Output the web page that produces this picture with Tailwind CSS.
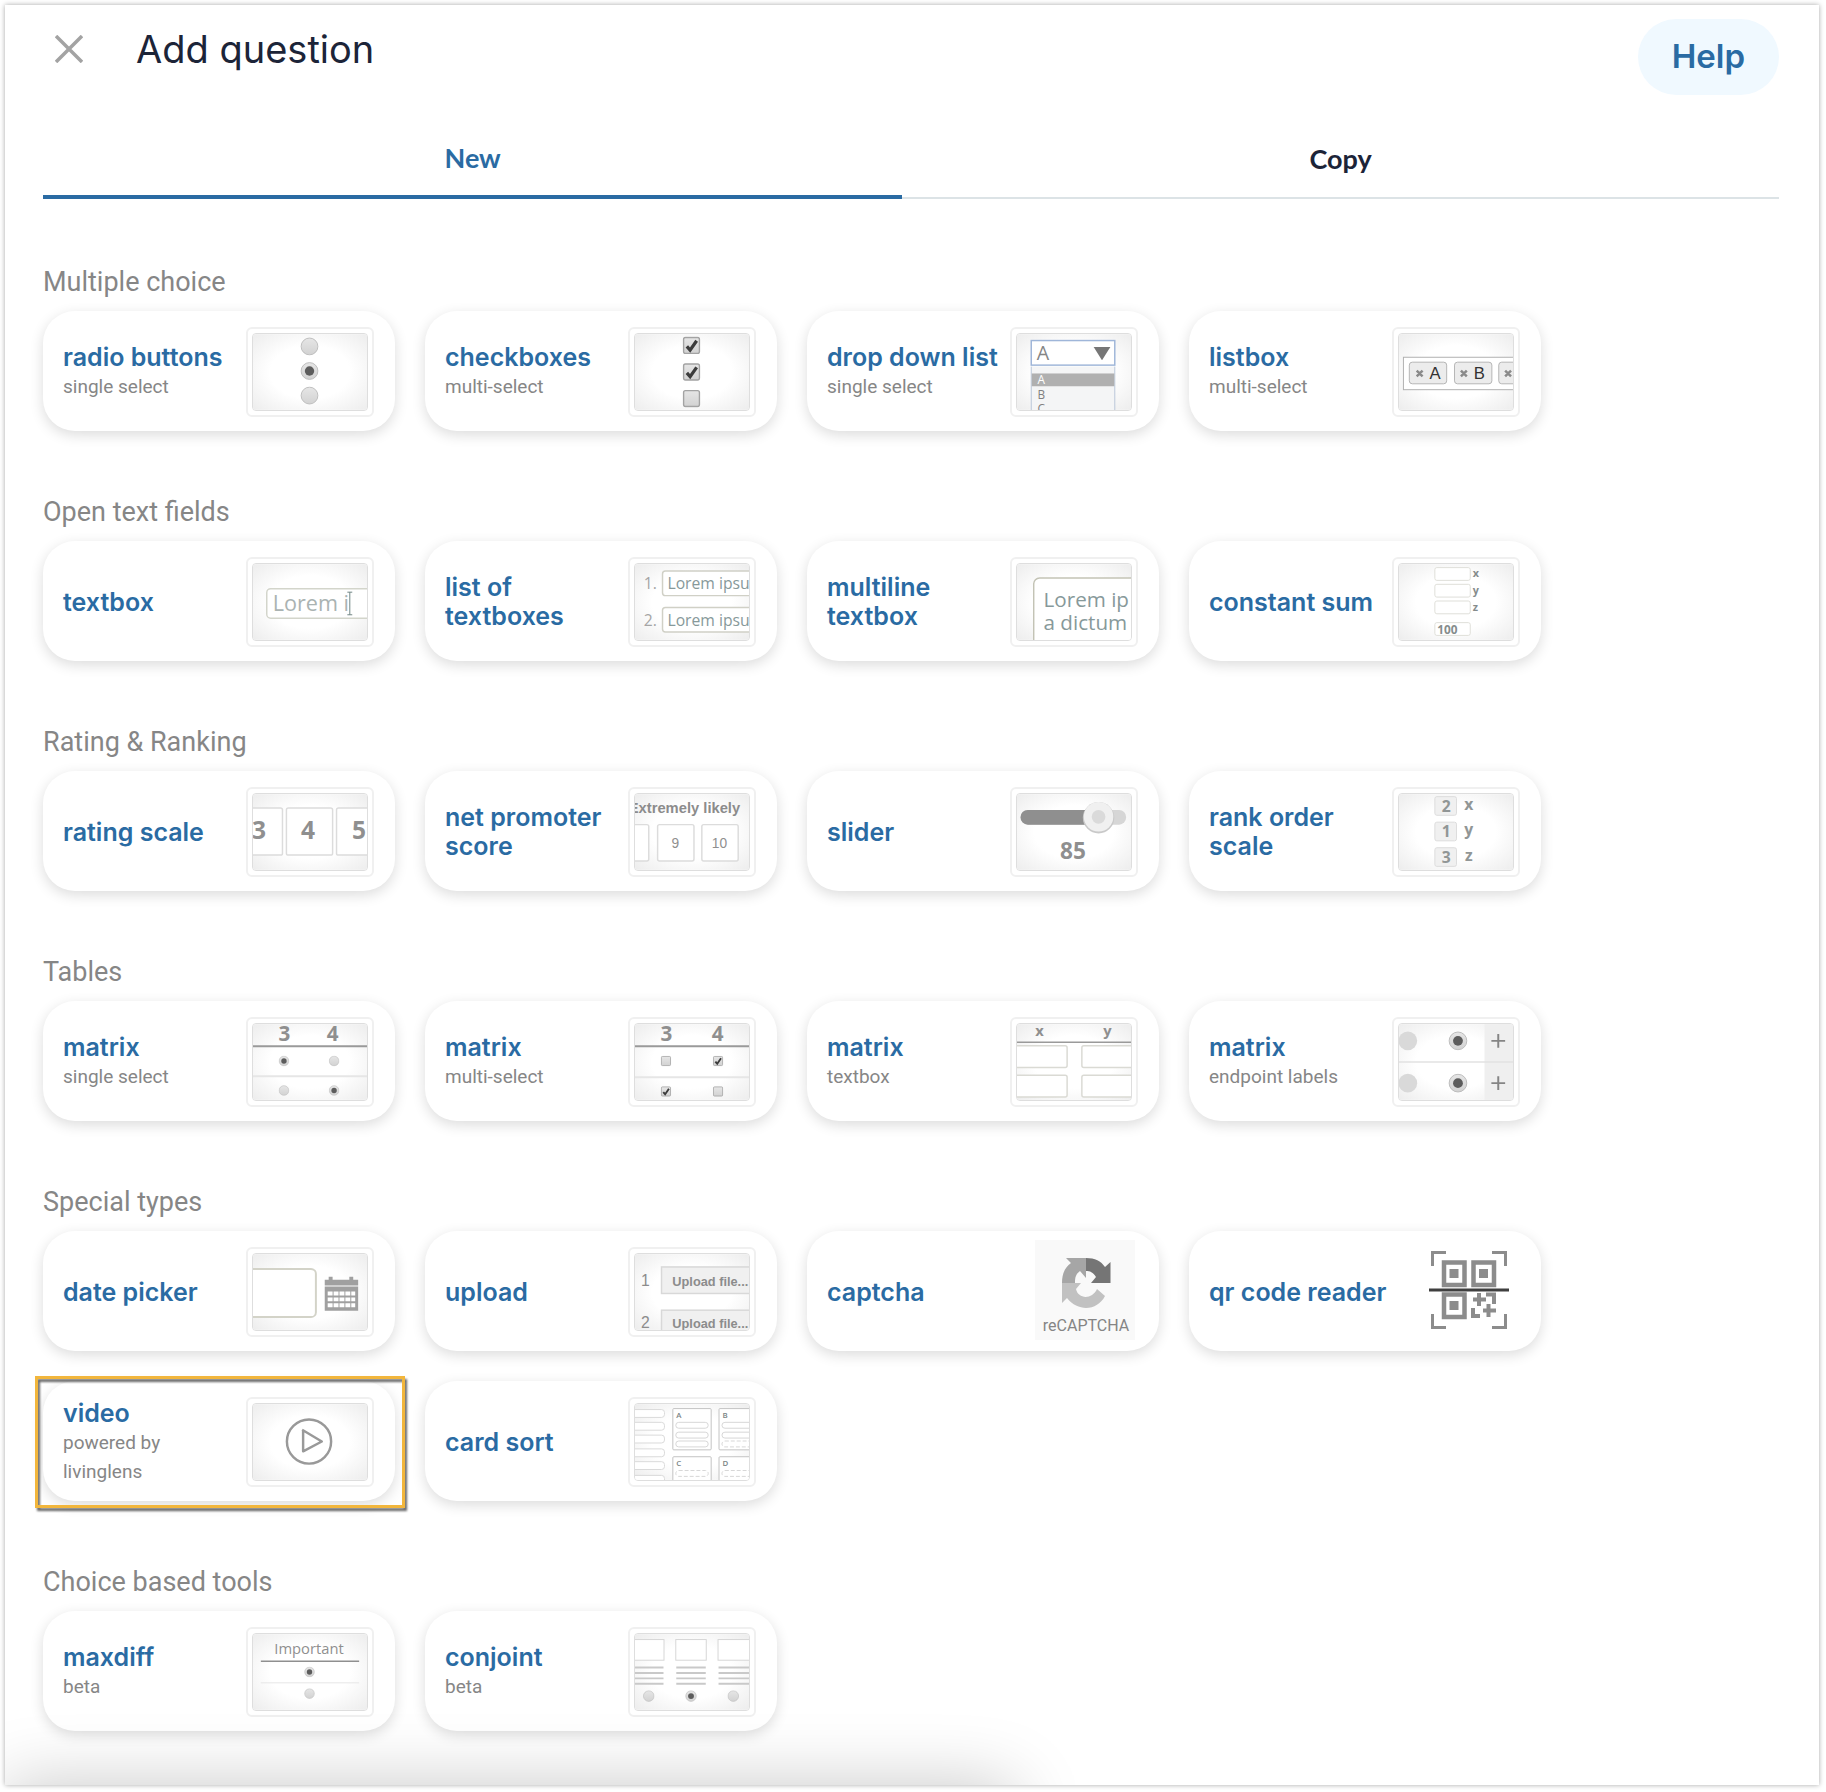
<!DOCTYPE html>
<html lang="en">
<head>
  <meta charset="UTF-8" />
  <meta name="viewport" content="width=device-width, initial-scale=1.0"/>
  <title>Add question</title>
  <script src="https://cdn.jsdelivr.net/npm/@tailwindcss/browser@4"></script>
</head>
<body class="bg-white p-[5px] pr-[7px] font-['Inter',sans-serif] text-[#1c2438]">

  <!-- Shared thumbnail parts -->
  <svg class="absolute h-0 w-0" aria-hidden="true">
    <defs>
      <radialGradient id="bg" cx="50%" cy="50%" r="70%">
        <stop offset="50%" stop-color="#ffffff"/>
        <stop offset="100%" stop-color="#ededed"/>
      </radialGradient>
      <linearGradient id="knob" x1="0" y1="0" x2="0" y2="1">
        <stop offset="0" stop-color="#e6e6e6"/>
        <stop offset="1" stop-color="#d2d2d2"/>
      </linearGradient>
      <symbol id="radio" viewBox="0 0 20 20">
        <circle cx="10" cy="10" r="9" fill="url(#knob)" stroke="#bcbcbc"/>
      </symbol>
      <symbol id="radio-on" viewBox="0 0 20 20">
        <circle cx="10" cy="10" r="9" fill="url(#knob)" stroke="#bcbcbc"/>
        <circle cx="10" cy="10" r="5" fill="#5c5c5c"/>
      </symbol>
      <symbol id="check" viewBox="0 0 20 20">
        <rect x="1.5" y="1.5" width="17" height="17" rx="2" fill="url(#knob)" stroke="#a3a3a3" stroke-width="1.5"/>
      </symbol>
      <symbol id="check-on" viewBox="0 0 20 20">
        <rect x="1.5" y="1.5" width="17" height="17" rx="2" fill="url(#knob)" stroke="#a3a3a3" stroke-width="1.5"/>
        <path d="M5 11l3.500 4L15.500 5" fill="none" stroke="#3c3c3c" stroke-width="3.500"/>
      </symbol>
    </defs>
  </svg>

  <main class="relative overflow-hidden bg-white pt-[14px] pr-10 pb-[54px] pl-[38px] shadow-[0_0_5px_rgba(0,0,0,0.35)]">

    <!-- Header -->
    <header class="flex items-start justify-between">
      <div class="flex h-[60px] items-center">
        <button type="button" aria-label="Close" class="ml-3 mr-[53px]">
          <svg class="block h-7 w-7" viewBox="0 0 28 28" stroke="#a3a3a3" stroke-width="3.500"><path d="M1 1l26 26M27 1L1 27"/></svg>
        </button>
        <h1 class="text-[38px]">Add question</h1>
      </div>
      <button type="button" class="h-[76px] rounded-full bg-[#f0f9ff] px-[34px] text-[33px] font-semibold text-[#2a6ba3]">Help</button>
    </header>

    <!-- Tabs -->
    <div role="tablist" class="mt-[22px] flex h-[82px] border-b-2 border-[#dce3e6] font-['Lato',sans-serif] text-[27px] font-bold">
      <button type="button" role="tab" aria-selected="true" class="-mb-[2px] w-[49.5%] border-b-4 border-[#2a6ba3] pt-1 text-[#2a6ba3]">New</button>
      <button type="button" role="tab" aria-selected="false" class="flex-1 pt-1">Copy</button>
    </div>

    <div class="mt-16 flex max-w-[1498px] flex-col gap-[62px] text-[25px] leading-[29px] font-semibold text-[#2a6ba3]">

      <!-- Multiple choice -->
      <section>
        <h2 class="mb-[10px] font-['Roboto',sans-serif] text-[27px] leading-[38px] font-normal text-[#868686]">Multiple choice</h2>
        <div class="grid grid-cols-4 gap-[30px]">
          <button type="button" class="flex min-h-[120px] items-center justify-between rounded-[32px] bg-white pt-0.5 pl-5 pr-[21px] text-left shadow-[0_4px_14px_rgba(0,0,0,0.14)]">
            <span class="whitespace-nowrap">radio buttons<small class="block font-['Roboto',sans-serif] text-[19px] font-normal text-[#868686]">single select</small></span>
            <span class="shrink-0 rounded-md border-2 border-[#f0f0f0] p-1">
              <svg class="block h-[78px] w-[116px] rounded-sm border border-[#dedede]" viewBox="0 0 116 77" aria-hidden="true">
                <rect width="116" height="77" fill="url(#bg)"/>
                <use href="#radio" x="48" y="3" width="19" height="19"/>
                <use href="#radio-on" x="48" y="28" width="19" height="19"/>
                <use href="#radio" x="48" y="53" width="19" height="19"/>
              </svg>
            </span>
          </button>
          <button type="button" class="flex min-h-[120px] items-center justify-between rounded-[32px] bg-white pt-0.5 pl-5 pr-[21px] text-left shadow-[0_4px_14px_rgba(0,0,0,0.14)]">
            <span class="whitespace-nowrap">checkboxes<small class="block font-['Roboto',sans-serif] text-[19px] font-normal text-[#868686]">multi-select</small></span>
            <span class="shrink-0 rounded-md border-2 border-[#f0f0f0] p-1">
              <svg class="block h-[78px] w-[116px] rounded-sm border border-[#dedede]" viewBox="0 0 116 77" aria-hidden="true">
                <rect width="116" height="77" fill="url(#bg)"/>
                <use href="#check-on" x="48" y="2" width="19" height="19"/>
                <use href="#check-on" x="48" y="29" width="19" height="19"/>
                <use href="#check" x="48" y="56" width="19" height="19"/>
              </svg>
            </span>
          </button>
          <button type="button" class="flex min-h-[120px] items-center justify-between rounded-[32px] bg-white pt-0.5 pl-5 pr-[21px] text-left shadow-[0_4px_14px_rgba(0,0,0,0.14)]">
            <span class="whitespace-nowrap">drop down list<small class="block font-['Roboto',sans-serif] text-[19px] font-normal text-[#868686]">single select</small></span>
            <span class="shrink-0 rounded-md border-2 border-[#f0f0f0] p-1">
              <svg class="block h-[78px] w-[116px] rounded-sm border border-[#dedede] font-['Open_Sans',sans-serif] font-normal" viewBox="0 0 116 77" aria-hidden="true">
                <rect width="116" height="77" fill="url(#bg)"/>
                <path d="M14.500 33V80H99.500V33" fill="#f4f5f6" stroke="#b9c6d8"/>
                <rect x="14.500" y="6.500" width="85" height="25" fill="#fff" stroke="#9fb6d9" stroke-width="1.500"/>
                <text x="20" y="26" font-size="20" fill="#858585">A</text>
                <path d="M78 13H95L86.500 26.500Z" fill="#767676"/>
                <rect x="15" y="40" width="84" height="13" fill="#b0b0b0"/>
                <text x="21" y="51" font-size="12" fill="#fff">A</text>
                <text x="21" y="66" font-size="12" fill="#808080">B</text>
                <text x="21" y="80" font-size="12" fill="#808080">C</text>
              </svg>
            </span>
          </button>
          <button type="button" class="flex min-h-[120px] items-center justify-between rounded-[32px] bg-white pt-0.5 pl-5 pr-[21px] text-left shadow-[0_4px_14px_rgba(0,0,0,0.14)]">
            <span class="whitespace-nowrap">listbox<small class="block font-['Roboto',sans-serif] text-[19px] font-normal text-[#868686]">multi-select</small></span>
            <span class="shrink-0 rounded-md border-2 border-[#f0f0f0] p-1">
              <svg class="block h-[78px] w-[116px] rounded-sm border border-[#dedede] font-['Liberation_Sans',sans-serif] font-normal" viewBox="0 0 116 77" aria-hidden="true">
                <rect width="116" height="77" fill="url(#bg)"/>
                <rect x="4.500" y="23.500" width="120" height="33" fill="#fff" stroke="#b0b0b0"/>
                <g fill="#ececec" stroke="#b5b5b5">
                  <rect x="10.500" y="28.500" width="38" height="22" rx="3"/>
                  <rect x="56.500" y="28.500" width="38" height="22" rx="3"/>
                  <rect x="101.500" y="28.500" width="38" height="22" rx="3"/>
                </g>
                <path d="M18 37l6 6m0-6l-6 6M63 37l6 6m0-6l-6 6M108 37l6 6m0-6l-6 6" stroke="#8a8a8a" stroke-width="2.500"/>
                <text x="31" y="46" font-size="17" fill="#333">A</text>
                <text x="76" y="46" font-size="17" fill="#333">B</text>
              </svg>
            </span>
          </button>
        </div>
      </section>

      <!-- Open text fields -->
      <section>
        <h2 class="mb-[10px] font-['Roboto',sans-serif] text-[27px] leading-[38px] font-normal text-[#868686]">Open text fields</h2>
        <div class="grid grid-cols-4 gap-[30px]">
          <button type="button" class="flex min-h-[120px] items-center justify-between rounded-[32px] bg-white pt-0.5 pl-5 pr-[21px] text-left shadow-[0_4px_14px_rgba(0,0,0,0.14)]">
            <span>textbox</span>
            <span class="shrink-0 rounded-md border-2 border-[#f0f0f0] p-1">
              <svg class="block h-[78px] w-[116px] rounded-sm border border-[#dedede] font-['Open_Sans',sans-serif] font-normal" viewBox="0 0 116 77" aria-hidden="true">
                <rect width="116" height="77" fill="url(#bg)"/>
                <rect x="14" y="25" width="120" height="30" rx="4" fill="#fff" stroke="#d3d5cb" stroke-width="1.500"/>
                <text x="20" y="48" font-size="22" fill="#aab3b2">Lorem i</text>
                <path d="M96 28.500h5M96 51.500h5M98.500 28.500v23" fill="none" stroke="#6f8583"/>
              </svg>
            </span>
          </button>
          <button type="button" class="flex min-h-[120px] items-center justify-between rounded-[32px] bg-white pt-0.5 pl-5 pr-[21px] text-left shadow-[0_4px_14px_rgba(0,0,0,0.14)]">
            <span>list of<br>textboxes</span>
            <span class="shrink-0 rounded-md border-2 border-[#f0f0f0] p-1">
              <svg class="block h-[78px] w-[116px] rounded-sm border border-[#dedede] font-['Open_Sans',sans-serif] font-normal" viewBox="0 0 116 77" aria-hidden="true">
                <rect width="116" height="77" fill="url(#bg)"/>
                <g fill="#fff" stroke="#d0d0c6" stroke-width="1.500">
                  <rect x="28" y="7" width="120" height="25" rx="3"/>
                  <rect x="28" y="44" width="120" height="25" rx="3"/>
                </g>
                <g font-size="16" fill="#87999a">
                  <text x="9" y="25" fill="#a5a5a5">1.</text>
                  <text x="33" y="25">Lorem ipsu</text>
                  <text x="9" y="63" fill="#a5a5a5">2.</text>
                  <text x="33" y="63">Lorem ipsu</text>
                </g>
              </svg>
            </span>
          </button>
          <button type="button" class="flex min-h-[120px] items-center justify-between rounded-[32px] bg-white pt-0.5 pl-5 pr-[21px] text-left shadow-[0_4px_14px_rgba(0,0,0,0.14)]">
            <span>multiline<br>textbox</span>
            <span class="shrink-0 rounded-md border-2 border-[#f0f0f0] p-1">
              <svg class="block h-[78px] w-[116px] rounded-sm border border-[#dedede] font-['Open_Sans',sans-serif] font-normal" viewBox="0 0 116 77" aria-hidden="true">
                <rect width="116" height="77" fill="url(#bg)"/>
                <rect x="17" y="14" width="120" height="90" rx="6" fill="#fff" stroke="#c3c3b5" stroke-width="1.500"/>
                <g font-size="21" fill="#87999a">
                  <text x="27" y="44">Lorem ip</text>
                  <text x="27" y="67">a dictum</text>
                </g>
              </svg>
            </span>
          </button>
          <button type="button" class="flex min-h-[120px] items-center justify-between rounded-[32px] bg-white pt-0.5 pl-5 pr-[21px] text-left shadow-[0_4px_14px_rgba(0,0,0,0.14)]">
            <span class="whitespace-nowrap">constant sum</span>
            <span class="shrink-0 rounded-md border-2 border-[#f0f0f0] p-1">
              <svg class="block h-[78px] w-[116px] rounded-sm border border-[#dedede] font-['Open_Sans',sans-serif] font-bold" viewBox="0 0 116 77" aria-hidden="true">
                <rect width="116" height="77" fill="url(#bg)"/>
                <g fill="#fff" stroke="#deded8">
                  <rect x="36.500" y="3.500" width="36" height="13" rx="2"/>
                  <rect x="36.500" y="20.500" width="36" height="13" rx="2"/>
                  <rect x="36.500" y="37.500" width="36" height="13" rx="2"/>
                  <rect x="36.500" y="59.500" width="36" height="13" rx="2"/>
                </g>
                <g font-size="11" fill="#858c8c">
                  <text x="75" y="13">x</text>
                  <text x="75" y="30">y</text>
                  <text x="75" y="48">z</text>
                  <text x="39" y="71" font-size="12">100</text>
                </g>
              </svg>
            </span>
          </button>
        </div>
      </section>

      <!-- Rating & Ranking -->
      <section>
        <h2 class="mb-[10px] font-['Roboto',sans-serif] text-[27px] leading-[38px] font-normal text-[#868686]">Rating &amp; Ranking</h2>
        <div class="grid grid-cols-4 gap-[30px]">
          <button type="button" class="flex min-h-[120px] items-center justify-between rounded-[32px] bg-white pt-0.5 pl-5 pr-[21px] text-left shadow-[0_4px_14px_rgba(0,0,0,0.14)]">
            <span class="whitespace-nowrap">rating scale</span>
            <span class="shrink-0 rounded-md border-2 border-[#f0f0f0] p-1">
              <svg class="block h-[78px] w-[116px] rounded-sm border border-[#dedede] font-['Open_Sans',sans-serif] font-bold" viewBox="0 0 116 77" aria-hidden="true">
                <rect width="116" height="77" fill="url(#bg)"/>
                <g fill="#fff" stroke="#dcdcdc" stroke-width="1.500">
                  <rect x="-18" y="14" width="48" height="48" rx="2"/>
                  <rect x="34" y="14" width="47" height="48" rx="2"/>
                  <rect x="85" y="14" width="48" height="48" rx="2"/>
                </g>
                <g font-size="25" fill="#8f8f8f" text-anchor="middle">
                  <text x="6" y="46">3</text>
                  <text x="56" y="46">4</text>
                  <text x="108" y="46">5</text>
                </g>
              </svg>
            </span>
          </button>
          <button type="button" class="flex min-h-[120px] items-center justify-between rounded-[32px] bg-white pt-0.5 pl-5 pr-[21px] text-left shadow-[0_4px_14px_rgba(0,0,0,0.14)]">
            <span class="whitespace-nowrap">net promoter<br>score</span>
            <span class="shrink-0 rounded-md border-2 border-[#f0f0f0] p-1">
              <svg class="block h-[78px] w-[116px] rounded-sm border border-[#dedede] font-['Liberation_Sans',sans-serif] font-normal" viewBox="0 0 116 77" aria-hidden="true">
                <rect width="116" height="77" fill="url(#bg)"/>
                <text x="107" y="19" font-size="15" font-weight="700" fill="#8c8c8c" text-anchor="end">Extremely likely</text>
                <g fill="#fff" stroke="#dcdcdc" stroke-width="1.500">
                  <rect x="-20" y="31" width="34" height="37" rx="2"/>
                  <rect x="23" y="31" width="37" height="37" rx="2"/>
                  <rect x="68" y="31" width="37" height="37" rx="2"/>
                </g>
                <g font-size="14" fill="#8f8f8f" text-anchor="middle">
                  <text x="41" y="55">9</text>
                  <text x="86" y="55">10</text>
                </g>
              </svg>
            </span>
          </button>
          <button type="button" class="flex min-h-[120px] items-center justify-between rounded-[32px] bg-white pt-0.5 pl-5 pr-[21px] text-left shadow-[0_4px_14px_rgba(0,0,0,0.14)]">
            <span>slider</span>
            <span class="shrink-0 rounded-md border-2 border-[#f0f0f0] p-1">
              <svg class="block h-[78px] w-[116px] rounded-sm border border-[#dedede] font-['Open_Sans',sans-serif] font-bold" viewBox="0 0 116 77" aria-hidden="true">
                <rect width="116" height="77" fill="url(#bg)"/>
                <rect x="4" y="16" width="107" height="15" rx="7" fill="#d6d6d6"/>
                <path d="M11 16H83V31H11A7.500 7.500 0 0 1 11 16Z" fill="#8f8f8f"/>
                <circle cx="83" cy="24" r="16" fill="#c9c9c9"/>
                <circle cx="83" cy="23" r="15" fill="#f0f0f0"/>
                <circle cx="83" cy="23" r="7" fill="#dadada"/>
                <text x="57" y="66" font-size="23" fill="#8f8f8f" text-anchor="middle">85</text>
              </svg>
            </span>
          </button>
          <button type="button" class="flex min-h-[120px] items-center justify-between rounded-[32px] bg-white pt-0.5 pl-5 pr-[21px] text-left shadow-[0_4px_14px_rgba(0,0,0,0.14)]">
            <span class="whitespace-nowrap">rank order<br>scale</span>
            <span class="shrink-0 rounded-md border-2 border-[#f0f0f0] p-1">
              <svg class="block h-[78px] w-[116px] rounded-sm border border-[#dedede] font-['Open_Sans',sans-serif] font-bold" viewBox="0 0 116 77" aria-hidden="true">
                <rect width="116" height="77" fill="url(#bg)"/>
                <g fill="#f0f0f0" stroke="#dcdcdc">
                  <rect x="36.500" y="2.500" width="22" height="19" rx="2"/>
                  <rect x="36.500" y="28.500" width="22" height="19" rx="2"/>
                  <rect x="36.500" y="54.500" width="22" height="19" rx="2"/>
                </g>
                <g font-size="16" fill="#919696" text-anchor="middle">
                  <text x="48" y="18">2</text><text x="71" y="16">x</text>
                  <text x="48" y="44">1</text><text x="71" y="42">y</text>
                  <text x="48" y="70">3</text><text x="71" y="68">z</text>
                </g>
              </svg>
            </span>
          </button>
        </div>
      </section>

      <!-- Tables -->
      <section>
        <h2 class="mb-[10px] font-['Roboto',sans-serif] text-[27px] leading-[38px] font-normal text-[#868686]">Tables</h2>
        <div class="grid grid-cols-4 gap-[30px]">
          <button type="button" class="flex min-h-[120px] items-center justify-between rounded-[32px] bg-white pt-0.5 pl-5 pr-[21px] text-left shadow-[0_4px_14px_rgba(0,0,0,0.14)]">
            <span class="whitespace-nowrap">matrix<small class="block font-['Roboto',sans-serif] text-[19px] font-normal text-[#868686]">single select</small></span>
            <span class="shrink-0 rounded-md border-2 border-[#f0f0f0] p-1">
              <svg class="block h-[78px] w-[116px] rounded-sm border border-[#dedede] font-['Open_Sans',sans-serif] font-bold" viewBox="0 0 116 77" aria-hidden="true">
                <rect width="116" height="77" fill="url(#bg)"/>
                <g font-size="21" fill="#8f8f8f" text-anchor="middle">
                  <text x="32" y="17">3</text>
                  <text x="81" y="17">4</text>
                </g>
                <path d="M0 22.500H116" stroke="#9a9a9a" stroke-width="2"/>
                <path d="M0 53H116" stroke="#e6e6e6" stroke-width="2"/>
                <use href="#radio-on" x="26" y="32" width="11" height="11"/>
                <use href="#radio" x="77" y="32" width="11" height="11"/>
                <use href="#radio" x="26" y="62" width="11" height="11"/>
                <use href="#radio-on" x="77" y="62" width="11" height="11"/>
              </svg>
            </span>
          </button>
          <button type="button" class="flex min-h-[120px] items-center justify-between rounded-[32px] bg-white pt-0.5 pl-5 pr-[21px] text-left shadow-[0_4px_14px_rgba(0,0,0,0.14)]">
            <span class="whitespace-nowrap">matrix<small class="block font-['Roboto',sans-serif] text-[19px] font-normal text-[#868686]">multi-select</small></span>
            <span class="shrink-0 rounded-md border-2 border-[#f0f0f0] p-1">
              <svg class="block h-[78px] w-[116px] rounded-sm border border-[#dedede] font-['Open_Sans',sans-serif] font-bold" viewBox="0 0 116 77" aria-hidden="true">
                <rect width="116" height="77" fill="url(#bg)"/>
                <g font-size="21" fill="#8f8f8f" text-anchor="middle">
                  <text x="32" y="17">3</text>
                  <text x="84" y="17">4</text>
                </g>
                <path d="M0 22.500H116" stroke="#9a9a9a" stroke-width="2"/>
                <path d="M0 54H116" stroke="#e6e6e6" stroke-width="2"/>
                <use href="#check" x="26" y="32" width="11" height="11"/>
                <use href="#check-on" x="79" y="32" width="11" height="11"/>
                <use href="#check-on" x="26" y="63" width="11" height="11"/>
                <use href="#check" x="79" y="63" width="11" height="11"/>
              </svg>
            </span>
          </button>
          <button type="button" class="flex min-h-[120px] items-center justify-between rounded-[32px] bg-white pt-0.5 pl-5 pr-[21px] text-left shadow-[0_4px_14px_rgba(0,0,0,0.14)]">
            <span class="whitespace-nowrap">matrix<small class="block font-['Roboto',sans-serif] text-[19px] font-normal text-[#868686]">textbox</small></span>
            <span class="shrink-0 rounded-md border-2 border-[#f0f0f0] p-1">
              <svg class="block h-[78px] w-[116px] rounded-sm border border-[#dedede] font-['Open_Sans',sans-serif] font-bold" viewBox="0 0 116 77" aria-hidden="true">
                <rect width="116" height="77" fill="url(#bg)"/>
                <g font-size="15" fill="#8f8f8f" text-anchor="middle">
                  <text x="23" y="12">x</text>
                  <text x="92" y="12">y</text>
                </g>
                <path d="M0 18.500H116" stroke="#9a9a9a" stroke-width="1.500"/>
                <g fill="#fff" stroke="#dadad4" stroke-width="1.500">
                  <rect x="-20" y="22" width="71" height="22" rx="2"/>
                  <rect x="66" y="22" width="71" height="22" rx="2"/>
                  <rect x="-20" y="52" width="71" height="22" rx="2"/>
                  <rect x="66" y="52" width="71" height="22" rx="2"/>
                </g>
              </svg>
            </span>
          </button>
          <button type="button" class="flex min-h-[120px] items-center justify-between rounded-[32px] bg-white pt-0.5 pl-5 pr-[21px] text-left shadow-[0_4px_14px_rgba(0,0,0,0.14)]">
            <span class="whitespace-nowrap">matrix<small class="block font-['Roboto',sans-serif] text-[19px] font-normal text-[#868686]">endpoint labels</small></span>
            <span class="shrink-0 rounded-md border-2 border-[#f0f0f0] p-1">
              <svg class="block h-[78px] w-[116px] rounded-sm border border-[#dedede]" viewBox="0 0 116 77" aria-hidden="true">
                <rect width="116" height="77" fill="url(#bg)"/>
                <rect x="87" width="30" height="77" fill="#efefef"/>
                <path d="M0 38.500H116" stroke="#e2e2e2" stroke-width="1.500"/>
                <circle cx="9" cy="17" r="9.500" fill="#d9d9d9"/>
                <circle cx="9" cy="60" r="9.500" fill="#d9d9d9"/>
                <use href="#radio-on" x="50" y="7" width="20" height="20"/>
                <use href="#radio-on" x="50" y="50" width="20" height="20"/>
                <path d="M94 17h14M101 10v14M94 60h14M101 53v14" stroke="#858585" stroke-width="2"/>
              </svg>
            </span>
          </button>
        </div>
      </section>

      <!-- Special types -->
      <section>
        <h2 class="mb-[10px] font-['Roboto',sans-serif] text-[27px] leading-[38px] font-normal text-[#868686]">Special types</h2>
        <div class="grid grid-cols-4 gap-[30px]">
          <button type="button" class="flex min-h-[120px] items-center justify-between rounded-[32px] bg-white pt-0.5 pl-5 pr-[21px] text-left shadow-[0_4px_14px_rgba(0,0,0,0.14)]">
            <span class="whitespace-nowrap">date picker</span>
            <span class="shrink-0 rounded-md border-2 border-[#f0f0f0] p-1">
              <svg class="block h-[78px] w-[116px] rounded-sm border border-[#dedede]" viewBox="0 0 116 77" aria-hidden="true">
                <rect width="116" height="77" fill="url(#bg)"/>
                <rect x="-20" y="15" width="84" height="49" rx="5" fill="#fff" stroke="#d3d3c8" stroke-width="2"/>
                <path d="M73 26h4v-3h4v3h17v-3h4v3h5v6H73zM73 33h34v24.500H73z" fill="#a0a0a0"/>
                <path d="M76 38h5v4h-5zM82 38h5v4h-5zM88 38h5v4h-5zM94 38h5v4h-5zM100 38h4v4h-4zM76 44h5v4h-5zM82 44h5v4h-5zM88 44h5v4h-5zM94 44h5v4h-5zM100 44h4v4h-4zM76 50h5v4h-5zM82 50h5v4h-5zM88 50h5v4h-5zM94 50h5v4h-5zM100 50h4v4h-4z" fill="#fff"/>
              </svg>
            </span>
          </button>
          <button type="button" class="flex min-h-[120px] items-center justify-between rounded-[32px] bg-white pt-0.5 pl-5 pr-[21px] text-left shadow-[0_4px_14px_rgba(0,0,0,0.14)]">
            <span>upload</span>
            <span class="shrink-0 rounded-md border-2 border-[#f0f0f0] p-1">
              <svg class="block h-[78px] w-[116px] rounded-sm border border-[#dedede] font-['Liberation_Sans',sans-serif] font-bold" viewBox="0 0 116 77" aria-hidden="true">
                <rect width="116" height="77" fill="url(#bg)"/>
                <g fill="#f0f0f0" stroke="#d8d8d8" stroke-width="1.500">
                  <rect x="27" y="13" width="120" height="27"/>
                  <rect x="27" y="57" width="120" height="27"/>
                </g>
                <g font-size="13" fill="#8c8c8c">
                  <text x="6" y="32" font-size="16" font-weight="400">1</text>
                  <text x="38" y="32">Upload file...</text>
                  <text x="6" y="75" font-size="16" font-weight="400">2</text>
                  <text x="38" y="75">Upload file...</text>
                </g>
              </svg>
            </span>
          </button>
          <button type="button" class="flex min-h-[120px] items-center justify-between rounded-[32px] bg-white pt-0.5 pl-5 pr-6 text-left shadow-[0_4px_14px_rgba(0,0,0,0.14)]">
            <span>captcha</span>
            <svg class="mb-1 block h-[100px] w-[100px] font-['Roboto',sans-serif] font-normal" viewBox="0 0 100 100" aria-hidden="true">
              <rect width="100" height="100" fill="#f9f9f9"/>
              <path d="M51 18C60 18 66 21 70 27L75.500 22V43H56L61 37C58 32 55 31 51 31Z" fill="#757575"/>
              <path d="M51 18H31L36 23C29 28 27 35 27 43H40C40 37 41 34 45 31L51 38Z" fill="#a6a6a6"/>
              <path d="M27 43V63L32 58C44 73 63 70 70 56L62 49C57 60 43 59 41 49L46 43Z" fill="#c1c1c1"/>
              <text x="51" y="91" font-size="16" fill="#858585" text-anchor="middle">reCAPTCHA</text>
            </svg>
          </button>
          <button type="button" class="flex min-h-[120px] items-center justify-between rounded-[32px] bg-white pt-0.5 pl-5 pr-8 text-left shadow-[0_4px_14px_rgba(0,0,0,0.14)]">
            <span class="whitespace-nowrap">qr code reader</span>
            <svg class="mb-1 block h-20 w-20" viewBox="0 0 80 80" fill="none" stroke="#8c8c8c" stroke-width="3" aria-hidden="true">
              <path d="M3.500 16V2.500H17M63 2.500H76.500V16M76.500 64V77.500H63M17 77.500H3.500V64"/>
              <path d="M15 12.500H35.500V35H15zM44.500 12.500H65V35H44.500zM15 44.500H35.500V67H15z" stroke-width="4.500"/>
              <path d="M20.500 19h9v9h-9zM50 19h9v9h-9zM20.500 51h9v9h-9z" fill="#8c8c8c" stroke="none"/>
              <path d="M44 49.500h13M50 43v13M54 60.500h13M59.500 54v13M57 44.500h8V54M44 58v8h7" stroke-width="4"/>
              <path d="M0 40H80" stroke="#3f3f3f" stroke-width="3"/>
            </svg>
          </button>
          <div class="relative grid">
            <button type="button" class="flex min-h-[120px] items-center justify-between rounded-[32px] bg-white pt-0.5 pl-5 pr-[21px] text-left shadow-[0_4px_14px_rgba(0,0,0,0.14)]">
              <span>video<small class="block font-['Roboto',sans-serif] text-[19px] font-normal text-[#868686]">powered by<br>livinglens</small></span>
              <span class="shrink-0 rounded-md border-2 border-[#f0f0f0] p-1">
                <svg class="block h-[78px] w-[116px] rounded-sm border border-[#dedede]" viewBox="0 0 116 77" aria-hidden="true">
                  <rect width="116" height="77" fill="url(#bg)"/>
                  <g fill="none" stroke="#999" stroke-width="2.500">
                    <circle cx="57" cy="38" r="22.500"/>
                    <path d="M51 27V48L70 38L50 26" stroke-linejoin="round"/>
                  </g>
                </svg>
              </span>
            </button>
            <!-- Highlight frame -->
            <span class="pointer-events-none absolute -top-[5px] -right-[10px] -bottom-[7px] -left-2 border-[3px] border-[#f2b63c] drop-shadow-[2px_3px_1px_rgba(0,0,0,0.6)]"></span>
          </div>
          <button type="button" class="flex min-h-[120px] items-center justify-between rounded-[32px] bg-white pt-0.5 pl-5 pr-[21px] text-left shadow-[0_4px_14px_rgba(0,0,0,0.14)]">
            <span class="whitespace-nowrap">card sort</span>
            <span class="shrink-0 rounded-md border-2 border-[#f0f0f0] p-1">
              <svg class="block h-[78px] w-[116px] rounded-sm border border-[#dedede] font-['Open_Sans',sans-serif]" viewBox="0 0 116 77" aria-hidden="true">
                <rect width="116" height="77" fill="url(#bg)"/>
                <g fill="#fff" stroke="#d9d9d9">
                  <rect x="-20" y="5.500" width="50" height="8" rx="3"/>
                  <rect x="-20" y="18.500" width="50" height="8" rx="3"/>
                  <rect x="-20" y="31.500" width="50" height="8" rx="3"/>
                  <rect x="-20" y="45.500" width="50" height="8" rx="3"/>
                  <rect x="-20" y="58.500" width="50" height="8" rx="3"/>
                  <rect x="-20" y="72.500" width="50" height="8" rx="3"/>
                </g>
                <g fill="#fff" stroke="#c2c2c2">
                  <rect x="38.500" y="4.500" width="39" height="42" rx="1"/>
                  <rect x="85.500" y="4.500" width="39" height="42" rx="1"/>
                  <rect x="38.500" y="53.500" width="39" height="42" rx="1"/>
                  <rect x="85.500" y="53.500" width="39" height="42" rx="1"/>
                </g>
                <g fill="#fff" stroke="#d6d6d6">
                  <rect x="41.500" y="18.500" width="33" height="6" rx="3"/>
                  <rect x="41.500" y="28.500" width="33" height="6" rx="3"/>
                  <rect x="41.500" y="37.500" width="33" height="6" rx="3"/>
                  <rect x="88.500" y="18.500" width="33" height="6" rx="3"/>
                  <rect x="88.500" y="28.500" width="33" height="6" rx="3"/>
                  <rect x="88.500" y="37.500" width="33" height="6" rx="3" stroke-dasharray="4 2"/>
                  <rect x="41.500" y="67.500" width="33" height="6" rx="3" stroke-dasharray="4 2"/>
                  <rect x="88.500" y="67.500" width="33" height="6" rx="3" stroke-dasharray="4 2"/>
                </g>
                <g font-size="8" fill="#7b8585">
                  <text x="42" y="14">A</text>
                  <text x="89" y="14">B</text>
                  <text x="42" y="63">C</text>
                  <text x="89" y="63">D</text>
                </g>
              </svg>
            </span>
          </button>
        </div>
      </section>

      <!-- Choice based tools -->
      <section>
        <h2 class="mb-[10px] font-['Roboto',sans-serif] text-[27px] leading-[38px] font-normal text-[#868686]">Choice based tools</h2>
        <div class="grid grid-cols-4 gap-[30px]">
          <button type="button" class="flex min-h-[120px] items-center justify-between rounded-[32px] bg-white pt-0.5 pl-5 pr-[21px] text-left shadow-[0_4px_14px_rgba(0,0,0,0.14)]">
            <span>maxdiff<small class="block font-['Roboto',sans-serif] text-[19px] font-normal text-[#868686]">beta</small></span>
            <span class="shrink-0 rounded-md border-2 border-[#f0f0f0] p-1">
              <svg class="block h-[78px] w-[116px] rounded-sm border border-[#dedede] font-['Open_Sans',sans-serif] font-normal" viewBox="0 0 116 77" aria-hidden="true">
                <rect width="116" height="77" fill="url(#bg)"/>
                <text x="57" y="20" font-size="15" fill="#8f8f8f" text-anchor="middle">Important</text>
                <path d="M8 27.500H108" stroke="#8f8f8f" stroke-width="1.500"/>
                <path d="M8 49.500H108" stroke="#e6e6e6"/>
                <use href="#radio-on" x="52" y="33" width="11" height="11"/>
                <use href="#radio" x="52" y="55" width="11" height="11"/>
              </svg>
            </span>
          </button>
          <button type="button" class="flex min-h-[120px] items-center justify-between rounded-[32px] bg-white pt-0.5 pl-5 pr-[21px] text-left shadow-[0_4px_14px_rgba(0,0,0,0.14)]">
            <span>conjoint<small class="block font-['Roboto',sans-serif] text-[19px] font-normal text-[#868686]">beta</small></span>
            <span class="shrink-0 rounded-md border-2 border-[#f0f0f0] p-1">
              <svg class="block h-[78px] w-[116px] rounded-sm border border-[#dedede]" viewBox="0 0 116 77" aria-hidden="true">
                <rect width="116" height="77" fill="url(#bg)"/>
                <g fill="#fff" stroke="#d6d6d6">
                  <rect x="-1.500" y="5.500" width="31" height="21"/>
                  <rect x="41.500" y="5.500" width="31" height="21"/>
                  <rect x="84.500" y="5.500" width="33" height="21"/>
                </g>
                <path d="M0 34H29M42 34H72M85 34H116M0 39.500H29M42 39.500H72M85 39.500H116M0 45H29M42 45H72M85 45H116M0 50.500H29M42 50.500H72M85 50.500H116" stroke="#c9c9c9" stroke-width="2"/>
                <use href="#radio" x="8" y="57" width="12" height="12"/>
                <use href="#radio-on" x="51" y="57" width="12" height="12"/>
                <use href="#radio" x="94" y="57" width="12" height="12"/>
              </svg>
            </span>
          </button>
        </div>
      </section>
    </div>

    <!-- Fade over the bottom edge -->
    <div class="pointer-events-none absolute bottom-0 left-0 h-20 w-[60%] overflow-hidden">
      <div class="absolute top-full right-20 left-0 h-20 shadow-[0_0_70px_rgba(0,0,0,0.22)]"></div>
    </div>
  </main>
</body>
</html>
